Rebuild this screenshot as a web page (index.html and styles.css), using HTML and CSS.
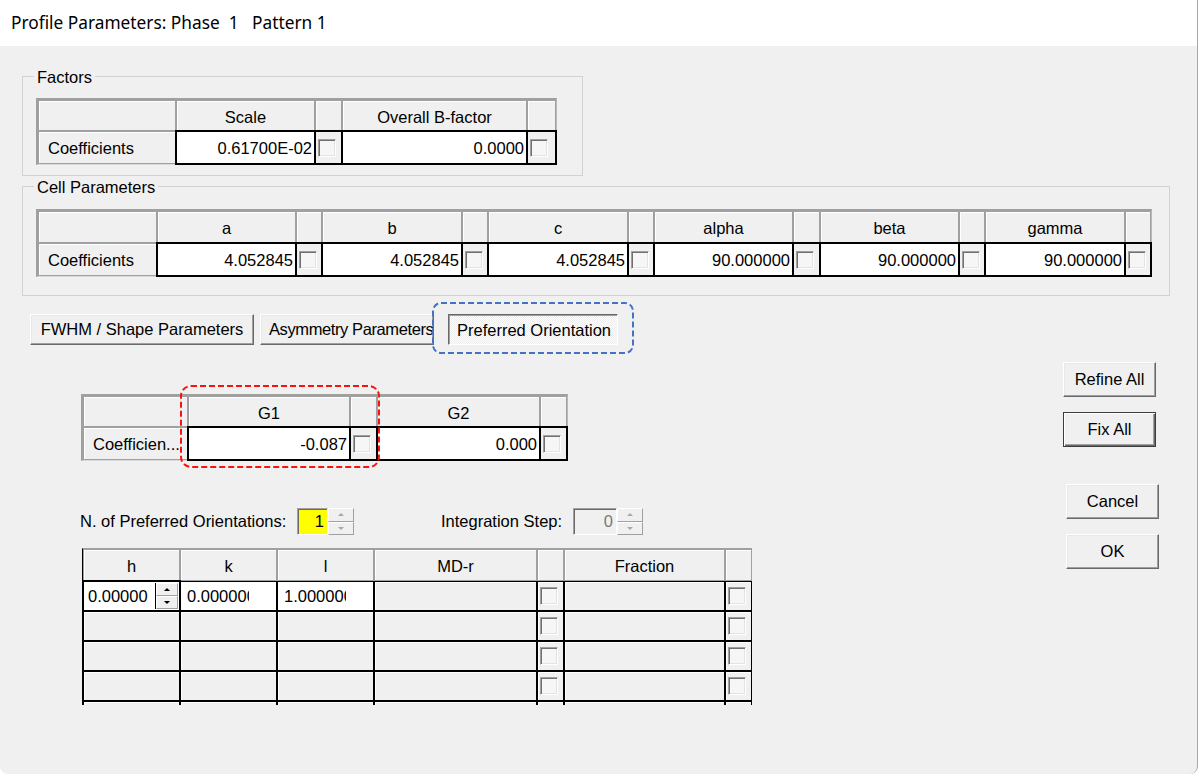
FILE: index.html
```html
<!DOCTYPE html>
<html>
<head>
<meta charset="utf-8">
<title>Profile Parameters</title>
<link rel="stylesheet" href="styles.css">
</head>
<body>
<div class="window">
  <div class="titlebar"><span class="title">Profile Parameters: Phase  1   Pattern 1</span></div>
  <div class="client">
    <fieldset class="group factors">
      <legend>Factors</legend>
      <div class="tbl">
        <div class="row head">
          <div class="hc"></div><div class="hc">Scale</div><div class="hc"></div><div class="hc">Overall B-factor</div><div class="hc"></div>
        </div>
        <div class="row data">
          <div class="hc lbl">Coefficients</div>
          <div class="vc">0.61700E-02</div><div class="cc"><span class="chk"></span></div>
          <div class="vc">0.0000</div><div class="cc"><span class="chk"></span></div>
        </div>
      </div>
    </fieldset>

    <fieldset class="group cells">
      <legend>Cell Parameters</legend>
      <div class="tbl">
        <div class="row head">
          <div class="hc"></div>
          <div class="hc">a</div><div class="hc"></div>
          <div class="hc">b</div><div class="hc"></div>
          <div class="hc">c</div><div class="hc"></div>
          <div class="hc">alpha</div><div class="hc"></div>
          <div class="hc">beta</div><div class="hc"></div>
          <div class="hc">gamma</div><div class="hc"></div>
        </div>
        <div class="row data">
          <div class="hc lbl">Coefficients</div>
          <div class="vc">4.052845</div><div class="cc"><span class="chk"></span></div>
          <div class="vc">4.052845</div><div class="cc"><span class="chk"></span></div>
          <div class="vc">4.052845</div><div class="cc"><span class="chk"></span></div>
          <div class="vc">90.000000</div><div class="cc"><span class="chk"></span></div>
          <div class="vc">90.000000</div><div class="cc"><span class="chk"></span></div>
          <div class="vc">90.000000</div><div class="cc"><span class="chk"></span></div>
        </div>
      </div>
    </fieldset>

    <div class="tabs">
      <div class="btn tab1">FWHM / Shape Parameters</div>
      <div class="btn tab2">Asymmetry Parameters</div>
      <div class="btn pressed tab3">Preferred Orientation</div>
    </div>

    <div class="lower">
      <div class="left">
        <div class="tbl gtbl">
          <div class="row head">
            <div class="hc"></div><div class="hc">G1</div><div class="hc"></div><div class="hc">G2</div><div class="hc"></div>
          </div>
          <div class="row data">
            <div class="hc lbl">Coefficien...</div>
            <div class="vc">-0.087</div><div class="cc"><span class="chk"></span></div>
            <div class="vc">0.000</div><div class="cc"><span class="chk"></span></div>
          </div>
        </div>

        <div class="spinrow">
          <span class="slabel">N. of Preferred Orientations:</span>
          <span class="sbox yellow">1</span>
          <span class="spin"><span class="sup"><i class="arr up grey"></i></span><span class="sdn"><i class="arr dn grey"></i></span></span>
          <span class="slabel2">Integration Step:</span>
          <span class="sbox disabled">0</span>
          <span class="spin"><span class="sup"><i class="arr up grey"></i></span><span class="sdn"><i class="arr dn grey"></i></span></span>
        </div>

        <div class="bgrid">
          <div class="brow bhead">
            <div class="hc">h</div><div class="hc">k</div><div class="hc">l</div><div class="hc">MD-r</div><div class="hc"></div><div class="hc">Fraction</div><div class="hc"></div>
          </div>
          <div class="brow">
            <div class="bc hedit"><span class="hval">0.00000</span><span class="hspin"><span class="sup"><i class="arr up"></i></span><span class="sdn"><i class="arr dn"></i></span></span></div>
            <div class="bc white"><span class="clip">0.000000</span></div>
            <div class="bc white"><span class="clip">1.000000</span></div>
            <div class="bc"></div>
            <div class="bc ck"><span class="chk"></span></div>
            <div class="bc"></div>
            <div class="bc ck"><span class="chk"></span></div>
          </div>
          <div class="brow">
            <div class="bc"></div><div class="bc"></div><div class="bc"></div><div class="bc"></div>
            <div class="bc ck"><span class="chk"></span></div><div class="bc"></div>
            <div class="bc ck"><span class="chk"></span></div>
          </div>
          <div class="brow">
            <div class="bc"></div><div class="bc"></div><div class="bc"></div><div class="bc"></div>
            <div class="bc ck"><span class="chk"></span></div><div class="bc"></div>
            <div class="bc ck"><span class="chk"></span></div>
          </div>
          <div class="brow">
            <div class="bc"></div><div class="bc"></div><div class="bc"></div><div class="bc"></div>
            <div class="bc ck"><span class="chk"></span></div><div class="bc"></div>
            <div class="bc ck"><span class="chk"></span></div>
          </div>
          <div class="brow">
            <div class="bc"></div><div class="bc"></div><div class="bc"></div><div class="bc"></div>
            <div class="bc ck"><span class="chk"></span></div><div class="bc"></div>
            <div class="bc ck"><span class="chk"></span></div>
          </div>
        </div>
      </div>

      <div class="right">
        <div class="btn rbtn shift">Refine All</div>
        <div class="btn rbtn shift default">Fix All</div>
        <div class="btn rbtn gapbig">Cancel</div>
        <div class="btn rbtn">OK</div>
      </div>
    </div>

    <svg class="mark blue" width="202" height="52" viewBox="0 0 202 52"><rect x="1" y="1" width="200" height="50" rx="8" ry="8"/></svg>
    <svg class="mark red" width="201" height="83" viewBox="0 0 201 83"><rect x="1" y="1" width="198" height="81" rx="10" ry="10"/></svg>
  </div>
</div>
</body>
</html>
```

FILE: styles.css
```css
* { box-sizing: border-box; }
html, body { margin: 0; padding: 0; background: #ffffff; }
body {
  font-family: "Liberation Sans", Arial, sans-serif;
  font-size: 16.5px;
  color: #000;
}
.window {
  width: 1198px;
  height: 774px;
  background: #f0f0f0;
  border-right: 1px solid #a8a8a8;
  border-radius: 0 0 8px 8px;
  overflow: hidden;
  display: flex;
  flex-direction: column;
}
.titlebar {
  height: 46px;
  flex: none;
  background: #ffffff;
  display: flex;
  align-items: center;
  padding-left: 11px;
  padding-bottom: 2px;
  font-family: "Noto Sans", "Open Sans", sans-serif;
  font-size: 17.3px;
  white-space: pre;
  color: #000;
}
.client {
  position: relative;
  flex: 1;
  padding-top: 21px;
}

/* group boxes */
.group {
  display: block;
  margin: 0 0 0 22px;
  padding: 0 0 10px 0;
  border: 1px solid #d2d2d2;
  min-width: 0;
}
.group legend {
  margin-left: 11px;
  padding: 1px 3px 0;
  line-height: 18px;
  font-size: 16.5px;
}
.factors { width: 561px; }
.factors .tbl { margin: 12px 0 0 13px; }
.cells { width: 1148px; margin-top: 1px; padding-bottom: 18px; }
.cells .tbl { margin: 13px 0 0 13px; }

/* grid tables */
.tbl {
  display: flex;
  flex-direction: column;
  width: max-content;
  border-style: solid;
  border-width: 2px 1px 1px 2px;
  border-color: #a0a0a0 #b8b8b8 #dadada #a0a0a0;
}
.row { display: grid; }
.row.head { height: 31px; }
.row.data { height: 33px; }
.cells .row.head { height: 32px; }
.factors .row { grid-template-columns: 138px 139px 27px 185px 29px; }
.cells .row { grid-template-columns: 119px 139px 26px 140px 26px 140px 26px 139px 27px 139px 26px 140px 26px; }
.gtbl .row { grid-template-columns: 105px 162px 27px 163px 27px; }

.hc {
  background: #f0f0f0;
  border: 1px solid #a0a0a0;
  box-shadow: inset 1px 1px 0 #ffffff;
  display: flex;
  align-items: center;
  justify-content: center;
  white-space: nowrap;
  overflow: hidden;
}
.row.head .hc, .brow.bhead .hc { padding-top: 3px; }
.hc.lbl { justify-content: flex-start; padding-left: 9px; padding-top: 2px; }
.vc {
  background: #ffffff;
  border: 1px solid #000;
  box-shadow: 0 0 0 1px #000;
  display: flex;
  align-items: center;
  justify-content: flex-end;
  padding: 2px 2px 0 0;
  white-space: nowrap;
}
.cc {
  background: #f0f0f0;
  border: 1px solid #000;
  box-shadow: 0 0 0 1px #000;
  display: flex;
  align-items: center;
  padding-left: 2px;
}
.chk {
  display: block;
  width: 18px;
  height: 18px;
  border: 1px solid;
  border-color: #a0a0a0 #ffffff #ffffff #a0a0a0;
  box-shadow: inset 1px 1px 0 #707070, inset -1px -1px 0 #e3e3e3;
  background: #f6f6f6;
}

/* buttons */
.btn {
  background: #f0f0f0;
  border: 1px solid;
  border-color: #ffffff #696969 #696969 #ffffff;
  box-shadow: inset -1px -1px 0 #a0a0a0, inset 1px 1px 0 #e8e8e8;
  display: flex;
  align-items: center;
  justify-content: center;
  white-space: nowrap;
  overflow: hidden;
}
.tabs {
  display: flex;
  margin: 18px 0 0 30px;
  height: 31px;
}
.tab1 { width: 224px; }
.tab2 { width: 174px; margin-left: 6px; justify-content: flex-start; padding-left: 8px; letter-spacing: -0.4px; }
.tab3 { width: 170px; margin-left: 14px; }
.btn.pressed {
  border-color: #696969 #ffffff #ffffff #696969;
  box-shadow: inset 1px 1px 0 #a0a0a0;
  background: repeating-conic-gradient(#ffffff 0 25%, #ececec 0 50%) 0 0 / 2px 2px;
  padding: 2px 0 0 2px;
}

.lower { display: flex; }
.left { margin-left: 81px; padding-top: 49px; }
.right {
  margin-left: auto;
  margin-right: 38px;
  padding-top: 17px;
  display: flex;
  flex-direction: column;
  align-items: flex-end;
}
.rbtn { width: 93px; height: 35px; margin-bottom: 15px; }
.rbtn.shift { margin-right: 3px; }
.rbtn.gapbig { margin-top: 22px; }
.btn.default {
  border: 1px solid #3c3c3c;
  box-shadow: inset 1px 1px 0 #ffffff, inset -1px -1px 0 #696969, inset -2px -2px 0 #a0a0a0;
}

/* spin row */
.spinrow {
  display: flex;
  align-items: center;
  height: 27px;
  margin: 47px 0 0 -1px;
}
.slabel { width: 217px; }
.slabel2 { width: 132px; margin-left: 87px; }
.sbox {
  height: 27px;
  display: flex;
  align-items: center;
  justify-content: flex-end;
  padding-right: 3px;
  border: 1px solid;
  border-color: #a0a0a0 #ffffff #ffffff #a0a0a0;
  box-shadow: inset 1px 1px 0 #696969;
}
.sbox.yellow { width: 31px; background: #ffff00; }
.sbox.disabled { width: 44px; background: #f0f0f0; color: #7a7a7a; }
.spin {
  width: 26px;
  height: 27px;
  display: flex;
  flex-direction: column;
}
.sup, .sdn {
  flex: 1;
  background: #f0f0f0;
  border: 1px solid;
  border-color: #ffffff #a0a0a0 #a0a0a0 #ffffff;
  display: flex;
  align-items: center;
  justify-content: center;
}
.arr { display: block; width: 0; height: 0; border-left: 3px solid transparent; border-right: 3px solid transparent; }
.arr.up { border-bottom: 3px solid #000; }
.arr.dn { border-top: 3px solid #000; }
.arr.up.grey { border-bottom-color: #a8a8a8; }
.arr.dn.grey { border-top-color: #a8a8a8; }

/* bottom grid */
.bgrid {
  margin: 13px 0 0 1px;
  height: 157px;
  overflow: hidden;
  border-top: 1px solid #a0a0a0;
  border-left: 1px solid #000;
  width: max-content;
}
.brow {
  display: grid;
  grid-template-columns: 97px 97px 97px 163px 27px 161px 27px;
  height: 30px;
}
.brow.bhead { height: 32px; }
.bc {
  background: #f0f0f0;
  border: 1px solid #000;
  box-shadow: inset 1px 1px 0 #ffffff;
  display: flex;
  align-items: center;
}
.bc.ck { padding-left: 2px; }
.bc.white { background: #ffffff; padding-left: 6px; box-shadow: none; }
.clip { display: block; width: 62px; overflow: hidden; white-space: nowrap; }
.bc.hedit {
  background: #ffffff;
  box-shadow: 0 0 0 1px #000;
  align-items: stretch;
  padding: 1px;
}
.hval {
  flex: 1;
  display: flex;
  align-items: center;
  padding-left: 3px;
  border-right: 1px solid #000;
  overflow: hidden;
  white-space: nowrap;
}
.hspin { width: 22px; display: flex; flex-direction: column; }

/* annotation marks */
.mark { position: absolute; fill: none; stroke-width: 2; stroke-dasharray: 6 3; }
.mark.blue { left: 432px; top: 256px; stroke: #4472c4; }
.mark.red { left: 180px; top: 339px; stroke: #ff1010; }
```
